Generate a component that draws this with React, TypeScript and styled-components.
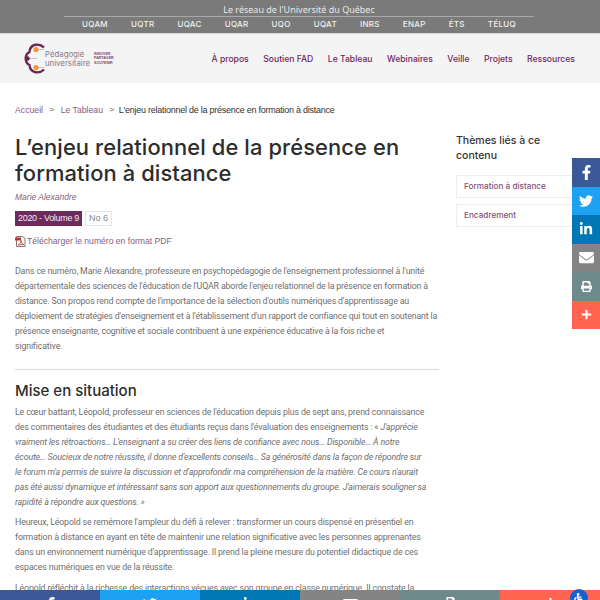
import { createGlobalStyle } from "styled-components";
import styled from "styled-components";
import { FaFacebookF, FaLinkedinIn, FaTwitter, FaEnvelope, FaPrint, FaPlus, FaWheelchair } from "react-icons/fa";

const PLUM = "#6d2a5c";
const HEADING = '"Inter", "Liberation Sans", sans-serif';
const BODY = '"Roboto", "Liberation Sans", sans-serif';
const ARIAL = '"Liberation Sans", Arial, sans-serif';

const schools = ["UQAM", "UQTR", "UQAC", "UQAR", "UQO", "UQAT", "INRS", "ENAP", "ÉTS", "TÉLUQ"];
const menu = ["À propos", "Soutien FAD", "Le Tableau", "Webinaires", "Veille", "Projets", "Ressources"];
const themes = ["Formation à distance", "Encadrement"];

const shares = [
  { color: "#3b5998", size: 15, Icon: FaFacebookF },
  { color: "#1da1f2", size: 14, Icon: FaTwitter },
  { color: "#0077b5", size: 14, Icon: FaLinkedinIn },
  { color: "#848484", size: 15, Icon: FaEnvelope },
  { color: "#6f8a8c", size: 11, Icon: FaPrint },
  { color: "#ff6550", size: 11, Icon: FaPlus },
];

const GlobalStyle = createGlobalStyle`
  html, body {
    margin: 0;
    height: 600px;
    overflow: hidden;
    background: #fff;
  }
`;

export default function App() {
  return (
    <>
      <GlobalStyle />
      <TopBar>
        <Network>Le réseau de l'Université du Québec</Network>
        <Schools>
          {schools.map((s) => (
            <School key={s}>{s}</School>
          ))}
        </Schools>
      </TopBar>
      <Header>
        <Logo>
          <LogoMark />
          <LogoName>
            Pédagogie
            <br />
            universitaire
          </LogoName>
          <LogoTag>
            INNOVER
            <br />
            PARTAGER
            <br />
            SOUTENIR
          </LogoTag>
        </Logo>
        <Menu>
          {menu.map((m) => (
            <MenuItem key={m}>{m}</MenuItem>
          ))}
        </Menu>
      </Header>
      <Page>
        <Main>
          <Crumbs>
            <Crumb>Accueil</Crumb>
            <Sep>&gt;</Sep>
            <Crumb>Le Tableau</Crumb>
            <Sep>&gt;</Sep>
            <CrumbCurrent>L'enjeu relationnel de la présence en formation à distance</CrumbCurrent>
          </Crumbs>
          <Title>L’enjeu relationnel de la présence en formation à distance</Title>
          <Author>Marie Alexandre</Author>
          <Badges>
            <Volume>2020 - Volume 9</Volume>
            <Issue>No 6</Issue>
          </Badges>
          <Download>
            <PdfIcon />
            Télécharger le numéro en format PDF
          </Download>
          <Intro>
            Dans ce numéro, Marie Alexandre, professeure en psychopédagogie de l'enseignement professionnel à l'unité
            <br />
            départementale des sciences de l'éducation de l'UQAR aborde l'enjeu relationnel de la présence en formation à
            <br />
            distance. Son propos rend compte de l'importance de la sélection d'outils numériques d'apprentissage au
            <br />
            déploiement de stratégies d'enseignement et à l'établissement d'un rapport de confiance qui tout en soutenant la
            <br />
            présence enseignante, cognitive et sociale contribuent à une expérience éducative à la fois riche et
            <br />
            significative.
          </Intro>
          <Rule />
          <Subtitle>Mise en situation</Subtitle>
          <Text>
            Le cœur battant, Léopold, professeur en sciences de l'éducation depuis plus de sept ans, prend connaissance
            <br />
            des commentaires des étudiantes et des étudiants reçus dans l'évaluation des enseignements : «{" "}
            <em>
              J'apprécie
              <br />
              vraiment les rétroactions… L'enseignant a su créer des liens de confiance avec nous… Disponible… À notre
              <br />
              écoute… Soucieux de notre réussite, il donne d'excellents conseils… Sa générosité dans la façon de répondre sur
              <br />
              le forum m'a permis de suivre la discussion et d'approfondir ma compréhension de la matière. Ce cours n'aurait
              <br />
              pas été aussi dynamique et intéressant sans son apport aux questionnements du groupe. J'aimerais souligner sa
              <br />
              rapidité à répondre aux questions. »
            </em>
          </Text>
          <Text>
            Heureux, Léopold se remémore l'ampleur du défi à relever : transformer un cours dispensé en présentiel en
            <br />
            formation à distance en ayant en tête de maintenir une relation significative avec les personnes apprenantes
            <br />
            dans un environnement numérique d'apprentissage. Il prend la pleine mesure du potentiel didactique de ces
            <br />
            espaces numériques en vue de la réussite.
          </Text>
          <Text>
            Léopold réfléchit à la richesse des interactions vécues avec son groupe en classe numérique. Il constate la
          </Text>
        </Main>
        <Aside>
          <AsideTitle>Thèmes liés à ce contenu</AsideTitle>
          {themes.map((t) => (
            <Theme key={t}>{t}</Theme>
          ))}
        </Aside>
      </Page>
      <SideShare>
        {shares.map(({ color, size, Icon }) => (
          <SideButton key={color} $color={color}>
            <Icon size={size} />
          </SideButton>
        ))}
      </SideShare>
      <BottomShare>
        {shares.map(({ color, size, Icon }) => (
          <BottomButton key={color} $color={color}>
            <Icon size={size} />
          </BottomButton>
        ))}
      </BottomShare>
      <Access>
        <FaWheelchair />
      </Access>
    </>
  );
}

function LogoMark() {
  return (
    <svg width="24" height="31" viewBox="0 0 24 31" fill="none">
      <path d="M23 4.5C18.5 0 10 0.5 8.5 8" stroke="#66284f" strokeWidth="2.4" />
      <path d="M23 26.5C18.5 31 10 30.5 8.5 23" stroke="#66284f" strokeWidth="2.4" />
      <path d="M9.5 8.5A7.5 7.5 0 0 0 9.5 22.5" stroke="#66284f" strokeWidth="2.4" />
      <path d="M7 15.5h9M15 6.5h8M15 24.5h8" stroke="#c9a0b5" strokeWidth="0.7" />
      <circle cx="15" cy="6.5" r="2.6" fill="#f0953f" />
      <circle cx="15" cy="24.5" r="2.6" fill="#f0953f" />
      <circle cx="6.5" cy="15.5" r="2.2" fill="#66284f" />
    </svg>
  );
}

function PdfIcon() {
  return (
    <svg width="11" height="11" viewBox="0 0 11 11">
      <path d="M1.5.5h6l2.5 2v8h-8.5z" fill="#fff" stroke="#555" strokeWidth="0.8" />
      <rect x="0" y="1.5" width="6" height="3" fill="#c9302c" />
      <path d="M3 9c2-1 3-2.5 3-4.5 0 2 1 3.5 3 4-2 0-4 0-6 .5z" fill="none" stroke="#c9302c" strokeWidth="0.8" />
    </svg>
  );
}

const TopBar = styled.div`
  height: 33px;
  background: #7a7a7a;
  display: flex;
  flex-direction: column;
  align-items: center;
  color: #fff;
`;

const Network = styled.div`
  width: 470px;
  height: 16px;
  margin-right: 2px;
  border-bottom: 1px solid #a9a9a9;
  text-align: center;
  font: 9px/19px "Noto Sans", "Open Sans", sans-serif;
  color: #e8e8e8;
`;

const Schools = styled.div`
  width: 470px;
  margin-right: 2px;
  display: flex;
  justify-content: space-between;
  padding: 0 18px;
  box-sizing: border-box;
`;

const School = styled.span`
  font: 500 8px/15px ${HEADING};
  letter-spacing: 0.3px;
  color: #f0f0f0;
`;

const Header = styled.header`
  height: 50px;
  background: #f4f4f4;
  border-top: 1px solid #d8d8d8;
  box-sizing: border-box;
  display: flex;
  align-items: center;
  justify-content: space-between;
  padding: 0 25px 0 21px;
`;

const Logo = styled.div`
  display: flex;
  align-items: center;
`;

const LogoName = styled.div`
  font: 7.8px/9px ${HEADING};
  color: #8a7a88;
  margin-left: 0;
`;

const LogoTag = styled.div`
  font: 600 3.6px/4.4px ${ARIAL};
  color: #7d4a6c;
  margin-left: 4px;
`;

const Menu = styled.nav`
  display: flex;
  gap: 14.5px;
`;

const MenuItem = styled.a`
  font: 500 8.6px/12px ${HEADING};
  color: ${PLUM};
`;

const Page = styled.div`
  display: flex;
  padding-left: 15px;
`;

const Main = styled.main`
  width: 424px;
  flex: none;
`;

const Crumbs = styled.div`
  display: flex;
  align-items: center;
  gap: 6.5px;
  margin-top: 20px;
  font: 8.7px/14px ${ARIAL};
`;

const Crumb = styled.a`
  color: #8b5a7f;
`;

const Sep = styled.span`
  color: #555;
  font-size: 8px;
`;

const CrumbCurrent = styled.span`
  margin-left: -2px;
  color: #333;
  font-size: 9px;
  letter-spacing: -0.25px;
`;

const Title = styled.h1`
  margin: 17px 0 0;
  font: 500 21.9px/26px ${HEADING};
  letter-spacing: 0.1px;
  color: #2d2d2d;
`;

const Author = styled.div`
  margin-top: 5px;
  font: italic 8.5px/12px ${ARIAL};
  color: #85607c;
`;

const Badges = styled.div`
  display: flex;
  gap: 3px;
  margin-top: 8px;
`;

const Volume = styled.span`
  background: ${PLUM};
  color: #f2e9ef;
  font: 9px/15px ${ARIAL};
  letter-spacing: -0.3px;
  padding: 0 3px;
`;

const Issue = styled.span`
  border: 1px solid #e6e6e6;
  color: #888;
  font: 9px/13px ${ARIAL};
  padding: 0 3px;
`;

const Download = styled.div`
  display: flex;
  align-items: center;
  gap: 1px;
  margin-top: 8px;
  font: 8.6px/14px ${ARIAL};
  color: #85607c;
`;

const Text = styled.p`
  margin: 0 0 5.5px;
  font: 8.8px/15px ${BODY};
  letter-spacing: -0.15px;
  color: #6f6f6f;
  white-space: nowrap;
`;

const Intro = styled(Text)`
  margin: 15.5px 0 0;
`;

const Rule = styled.hr`
  border: none;
  border-top: 1px solid #dcdcdc;
  margin: 15px 0 0;
`;

const Subtitle = styled.h2`
  margin: 10px 0 3px;
  font: 500 15px/22px ${HEADING};
  color: #2d2d2d;
`;

const Aside = styled.aside`
  margin: 51px 0 0 17px;
  width: 130px;
`;

const AsideTitle = styled.h3`
  margin: 0 0 12px;
  font: 500 10.5px/14.5px ${HEADING};
  color: #333;
  width: 100px;
`;

const Theme = styled.div`
  border: 1px solid #eee;
  height: 23px;
  box-sizing: border-box;
  margin-bottom: 6px;
  padding-left: 7px;
  font: 500 8.2px/20px ${HEADING};
  color: #85507a;
`;

const SideShare = styled.div`
  position: fixed;
  right: 0;
  top: 158px;
  width: 28px;
  display: flex;
  flex-direction: column;
`;

const SideButton = styled.a<{ $color: string }>`
  height: 28.5px;
  display: flex;
  align-items: center;
  justify-content: center;
  background: ${({ $color }) => $color};
  color: #fff;
`;

const BottomShare = styled.div`
  position: fixed;
  left: 0;
  right: 0;
  bottom: 0;
  height: 10px;
  display: flex;
  overflow: hidden;
`;

const BottomButton = styled.a<{ $color: string }>`
  flex: 1;
  height: 28px;
  display: flex;
  justify-content: center;
  padding-top: 7px;
  box-sizing: border-box;
  background: ${({ $color }) => $color};
  color: #fff;
`;

const Access = styled.div`
  position: fixed;
  left: 570px;
  top: 589px;
  width: 18px;
  height: 18px;
  border-radius: 50%;
  background: #1a5fd0;
  color: #fff;
  display: flex;
  align-items: center;
  justify-content: center;
  font-size: 11px;
`;
